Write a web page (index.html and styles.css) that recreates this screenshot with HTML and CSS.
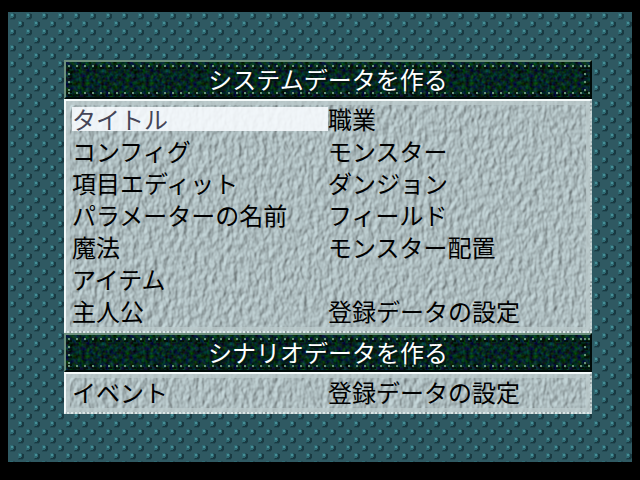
FILE: index.html
```
<!DOCTYPE html>
<html lang="ja">
<head>
  <meta charset="UTF-8" />
  <title>システムデータを作る</title>
  <meta name="viewport" content="width=device-width, initial-scale=1" />
  <link rel="stylesheet" href="styles.css">
</head>
<body>
  <main class="screen">
    <section>
      <h2 class="heading">システムデータを作る</h2>
      <div class="menu">
        <button type="button" class="item selected">タイトル</button>
        <button type="button" class="item">職業</button>
        <button type="button" class="item">コンフィグ</button>
        <button type="button" class="item">モンスター</button>
        <button type="button" class="item">項目エディット</button>
        <button type="button" class="item">ダンジョン</button>
        <button type="button" class="item">パラメーターの名前</button>
        <button type="button" class="item">フィールド</button>
        <button type="button" class="item">魔法</button>
        <button type="button" class="item">モンスター配置</button>
        <button type="button" class="item wide">アイテム</button>
        <button type="button" class="item">主人公</button>
        <button type="button" class="item">登録データの設定</button>
      </div>
    </section>
    <section>
      <h2 class="heading">シナリオデータを作る</h2>
      <div class="menu">
        <button type="button" class="item">イベント</button>
        <button type="button" class="item">登録データの設定</button>
      </div>
    </section>
  </main>
</body>
</html>
```

FILE: styles.css
```
* {
  box-sizing: border-box;
}
body {
  margin: 0;
  padding: 12px 8px 18px;
  background: #000;
  font-family: "Noto Sans CJK JP", sans-serif;
  font-size: 24px;
  line-height: 24px;
}

/* studded metal wall */
.screen {
  min-height: calc(100vh - 30px);
  padding: 48px 40px 48px 56px;
  background: #2f5962 url("data:image/svg+xml,%3Csvg xmlns='http://www.w3.org/2000/svg' width='16' height='16' shape-rendering='crispEdges'%3E%3Cdefs%3E%3Cg id='d'%3E%3Cpath fill='%23264e57' d='M2 1h5v1h1v5h-1v1h-5z'/%3E%3Cpath fill='%23193941' d='M5 2h3v4h-1v1h-4v-2h2z'/%3E%3Cpath fill='%232f6871' d='M2 1h3v1h1v3h-1v1h-3z'/%3E%3Cpath fill='%23468f97' d='M3 2h2v2h-2z'/%3E%3C/g%3E%3C/defs%3E%3Cuse href='%23d'/%3E%3Cuse href='%23d' x='8' y='8'/%3E%3C/svg%3E");
}

/* dark riveted title bar */
.heading {
  position: relative;
  margin: 0;
  padding: 5px 6px 6px;
  border: 2px solid #6c8f7d;
  border-right-color: #000a08;
  border-bottom-color: #000a08;
  background: #06241f url("data:image/svg+xml,%3Csvg xmlns='http://www.w3.org/2000/svg' width='64' height='36'%3E%3Cfilter id='n' x='0' y='0' width='100%25' height='100%25' color-interpolation-filters='sRGB'%3E%3CfeTurbulence type='fractalNoise' baseFrequency='.25 .25' numOctaves='2' seed='7' stitchTiles='stitch'/%3E%3CfeColorMatrix values='.2 0 0 0 -.08 0 .5 0 0 -.1 0 0 .5 0 -.12 0 0 0 0 1'/%3E%3C/filter%3E%3Crect width='64' height='36' filter='url(%23n)'/%3E%3C/svg%3E");
  color: #fff;
  font-size: 24px;
  font-weight: 400;
  line-height: 24px;
  text-align: center;
  text-shadow: 2px 2px 0 #031712;
}
.heading::before {
  content: "";
  position: absolute;
  inset: 0;
  --rivet: url("data:image/svg+xml,%3Csvg xmlns='http://www.w3.org/2000/svg' width='8' height='8'%3E%3Cpath fill='%23668f76' d='M2 3h2v2h-2z'/%3E%3Cpath fill='%23031008' d='M4 5h2v2h-4v-1h2z'/%3E%3C/svg%3E");
  background: var(--rivet) 0 0 / 8px 8px repeat-x, var(--rivet) 0 100% / 8px 8px repeat-x, var(--rivet) 0 0 / 8px 8px repeat-y, var(--rivet) 100% 0 / 8px 8px repeat-y;
}

/* rough stone plate */
.menu {
  display: grid;
  grid-template-columns: 1fr 1fr;
  row-gap: 8px;
  padding: 6px 6px 8px;
  border-top: 2px solid #f4fafa;
  border-left: 2px solid #f4fafa;
  border-right: 2px dotted #c6d4d4;
  border-bottom: 2px dotted #dbe6e6;
  box-shadow: inset 0 0 0 4px rgba(187, 202, 203, 0.75);
  background: #a7b8bb url("data:image/svg+xml,%3Csvg xmlns='http://www.w3.org/2000/svg' width='640' height='480'%3E%3Cfilter id='n' x='0' y='0' width='100%25' height='100%25' color-interpolation-filters='sRGB'%3E%3CfeTurbulence type='fractalNoise' baseFrequency='.2 .13' numOctaves='2' seed='4'/%3E%3CfeDiffuseLighting surfaceScale='1.2' diffuseConstant='1' lighting-color='%23cbdde0'%3E%3CfeDistantLight azimuth='215' elevation='58'/%3E%3C/feDiffuseLighting%3E%3C/filter%3E%3Crect width='640' height='480' filter='url(%23n)'/%3E%3C/svg%3E");
}
.item {
  height: 24px;
  margin: 0;
  padding: 0;
  border: 0;
  background: none;
  color: #000;
  font: inherit;
  text-align: left;
  white-space: nowrap;
  cursor: pointer;
}
.wide {
  grid-column: 1 / -1;
}
.selected {
  background: rgba(248, 252, 255, 0.88);
  color: #454557;
}
.item:focus-visible {
  outline: 2px solid #fff;
}
```
